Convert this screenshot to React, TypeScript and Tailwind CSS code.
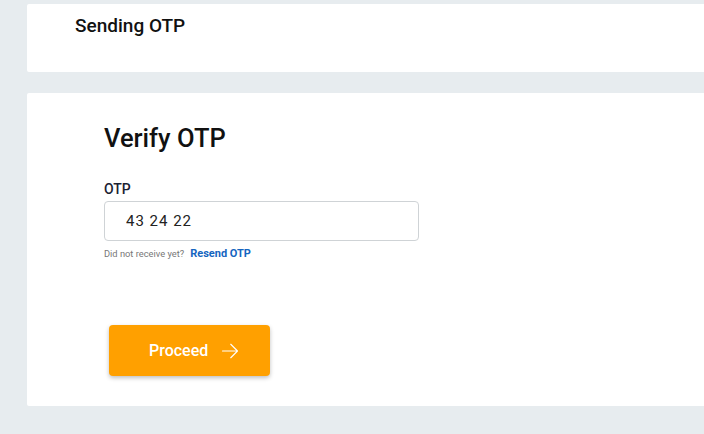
import React, { useState } from 'react';

export default function App() {
  const [otp, setOtp] = useState('43 24 22');

  return (
    <div
      className="min-h-[434px] w-[704px] bg-[#e7ecef] pl-[27px] pt-[4px] pb-[28px] flex flex-col gap-[21px] overflow-hidden"
      style={{ fontFamily: 'Roboto, "Noto Sans", sans-serif' }}
    >
      {/* step header */}
      <div className="h-[68px] bg-white rounded-l-[2px] pl-[48px] pt-[11px]">
        <h3 className="text-[19px] font-medium text-[#111] leading-[22px]">Sending OTP</h3>
      </div>

      {/* verify card */}
      <div className="h-[313px] bg-white rounded-l-[2px] pl-[77px] pt-[28px]">
        <h2 className="text-[25.5px] font-medium text-[#111] leading-[34px]">Verify OTP</h2>

        <label className="block mt-[26px] text-[14px] font-medium text-[#1b2233] leading-[17px]">OTP</label>
        <input
          className="mt-[3px] w-[315px] h-[40px] rounded-[4px] border border-[#cfd3d6] px-[21px] text-[15px] tracking-[1px] text-[#222] outline-none"
          value={otp}
          onChange={e => setOtp(e.target.value)}
        />
        <div className="mt-[6px] flex items-center gap-[6px] leading-[14px]">
          <span className="text-[9.3px] text-[#777]">Did not receive yet?</span>
          <button className="text-[11px] font-bold text-[#1565c0]">Resend OTP</button>
        </div>

        <button className="ml-[5px] mt-[64px] w-[161px] h-[51px] rounded-[4px] bg-[#ffa000] text-white text-[16px] font-medium flex items-center pl-[40px] gap-[13px] shadow-[0_2px_4px_rgba(0,0,0,0.25)]">
          <span>Proceed</span>
          <svg className="w-[18px] h-[18px]" viewBox="0 0 24 24" fill="none" stroke="currentColor" strokeWidth={1.5} strokeLinecap="round" strokeLinejoin="round">
            <path d="M2 12h20M13 3l9 9-9 9" />
          </svg>
        </button>
      </div>
    </div>
  );
}
